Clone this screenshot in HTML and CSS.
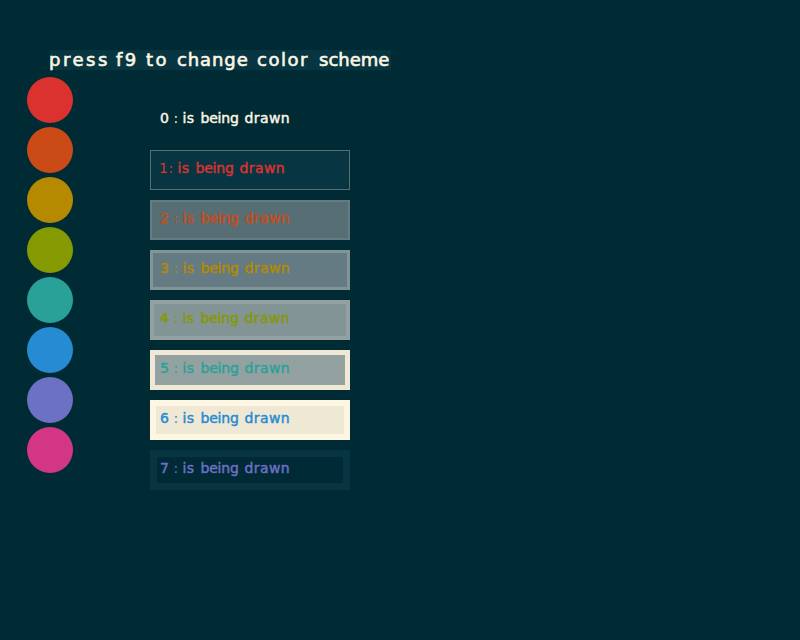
FILE: index.html
```
<!DOCTYPE html>
<html lang="en">
<head>
<meta charset="utf-8">
<title>Color scheme</title>
<link rel="stylesheet" href="styles.css">
</head>
<body>
<h1 class="hint"><span class="press">press</span><span class="key">f9</span><span class="to">to</span><span class="change">change</span><span class="color">color</span><span class="scheme">scheme</span></h1>
<main class="demo">
<div class="swatches">
<i class="dot red"></i><i class="dot orange"></i><i class="dot yellow"></i><i class="dot green"></i><i class="dot cyan"></i><i class="dot blue"></i><i class="dot violet"></i><i class="dot magenta"></i>
</div>
<div class="boxes">
<p class="box b0"><span class="num">0</span><span class="colon">:</span><span class="is">is</span><span class="being">being</span><span class="drawn">drawn</span></p>
<p class="box b1"><span class="num">1</span><span class="colon">:</span><span class="is">is</span><span class="being">being</span><span class="drawn">drawn</span></p>
<p class="box b2"><span class="num">2</span><span class="colon">:</span><span class="is">is</span><span class="being">being</span><span class="drawn">drawn</span></p>
<p class="box b3"><span class="num">3</span><span class="colon">:</span><span class="is">is</span><span class="being">being</span><span class="drawn">drawn</span></p>
<p class="box b4"><span class="num">4</span><span class="colon">:</span><span class="is">is</span><span class="being">being</span><span class="drawn">drawn</span></p>
<p class="box b5"><span class="num">5</span><span class="colon">:</span><span class="is">is</span><span class="being">being</span><span class="drawn">drawn</span></p>
<p class="box b6"><span class="num">6</span><span class="colon">:</span><span class="is">is</span><span class="being">being</span><span class="drawn">drawn</span></p>
<p class="box b7"><span class="num">7</span><span class="colon">:</span><span class="is">is</span><span class="being">being</span><span class="drawn">drawn</span></p>
</div>
</main>
</body>
</html>
```
FILE: styles.css
```
* { box-sizing: border-box; }
html { background: #002b34; }
body {
  margin: 0;
  padding: 50px 0 0 27px;
  height: 640px;
  overflow: hidden;
  font-family: "DejaVu Sans", sans-serif;
  color: #fdf6e3;
}
.hint {
  display: flex;
  width: 341px;
  height: 20px;
  margin: 0 0 7px 23px;
  background: #073642;
  font-size: 18px;
  font-weight: 400;
  line-height: 19px;
  white-space: nowrap;
  -webkit-text-stroke: 0.6px currentColor;
}
.hint span { flex: none; }
.press { width: 67px; margin-left: -1px; letter-spacing: 2.5px; }
.key { width: 30px; letter-spacing: 2.5px; }
.to { width: 31px; letter-spacing: 2.5px; }
.change { width: 80px; letter-spacing: 0.9px; }
.color { width: 62px; letter-spacing: 1.5px; }
.scheme { letter-spacing: 0; }
.demo { display: flex; gap: 77px; }
.swatches { display: flex; flex-direction: column; gap: 4px; }
.dot { width: 46px; height: 46px; border-radius: 50%; }
.red { background: #dc322f; }
.orange { background: #cb4b16; }
.yellow { background: #b58900; }
.green { background: #859900; }
.cyan { background: #2aa198; }
.blue { background: #268bd2; }
.violet { background: #6c71c4; }
.magenta { background: #d33682; }
.boxes { display: flex; flex-direction: column; gap: 10px; padding-top: 23px; }
.box {
  --edge: 0px;
  display: flex;
  width: 200px;
  height: 40px;
  margin: 0;
  padding: calc(10px - var(--edge)) 0 0 calc(10px - var(--edge));
  border: var(--edge) solid;
  font-size: 14px;
  line-height: 16px;
  white-space: nowrap;
  -webkit-text-stroke: 0.45px currentColor;
}
.box span { flex: none; }
.num { width: 13.5px; }
.colon { width: 9px; -webkit-text-stroke: 0; }
.is { width: 18px; letter-spacing: 0.4px; }
.being { width: 44px; letter-spacing: -0.2px; }
.drawn { letter-spacing: 0.4px; }
.b1 .num { width: 9.5px; margin-left: -1px; -webkit-text-stroke: 0; }
.b1 .colon { width: 9px; }
.b0 { color: #fdf6e3; }
.b1 { --edge: 1px; color: #dc322f; background: #073642; border-color: #586e75; }
.b2 { --edge: 2px; color: #cb4b16; background: #586e75; border-color: #657b83; }
.b3 { --edge: 3px; color: #b58900; background: #657b83; border-color: #839496; }
.b4 { --edge: 4px; color: #859900; background: #839496; border-color: #93a1a1; }
.b5 { --edge: 5px; color: #2aa198; background: #93a1a1; border-color: #eee8d5; }
.b6 { --edge: 6px; color: #268bd2; background: #eee8d5; border-color: #fdf6e3; }
.b7 { --edge: 7px; color: #6c71c4; background: #002b36; border-color: #073642; }
```
